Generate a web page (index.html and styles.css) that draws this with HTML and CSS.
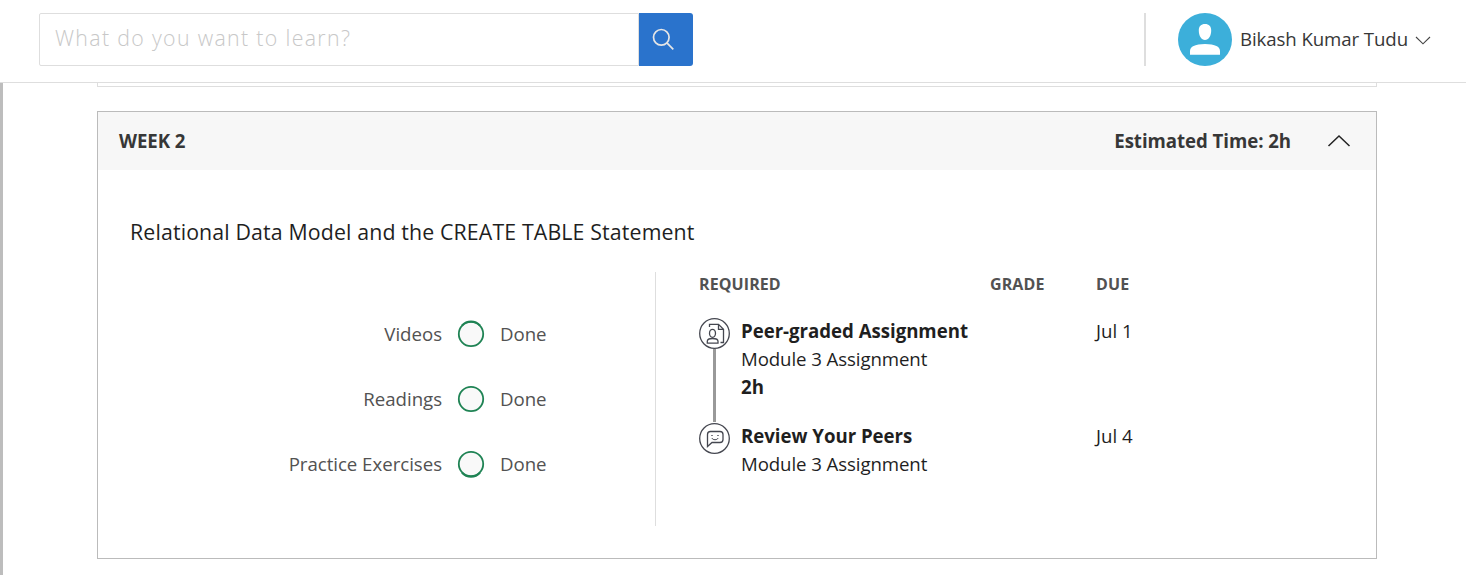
FILE: index.html
```html
<!DOCTYPE html>
<html lang="en">
<head>
<meta charset="utf-8">
<title>Course Home</title>
<link rel="stylesheet" href="styles.css">
</head>
<body>
<header class="topbar">
  <form class="search">
    <input class="search-input" type="text" placeholder="What do you want to learn?">
    <button class="search-button" type="button" aria-label="Search">
      <svg width="24" height="24" viewBox="0 0 24 24" fill="none" stroke="#e6e6e6" stroke-width="1.7"><circle cx="9.300" cy="9.300" r="7.800"/><path d="M14.900 14.900L21.300 21.300"/></svg>
    </button>
  </form>
  <div class="account">
    <svg class="avatar" width="54" height="53" viewBox="0 0 54 53"><ellipse cx="27" cy="26.5" rx="27" ry="26.5" fill="#3cafda"/><path fill="#fff" d="M27 11c4 0 6.200 2.200 6.200 6.500C33.200 23 30.500 27 27 27s-6.200-4-6.200-9.500C20.800 13.200 23 11 27 11zM12 41.700v-3.500c0-2 .8-4 3-5C18.500 31.700 22 31 27 31s8.500.7 12 2.200c2.200 1 3 3 3 5v3.500z"/></svg>
    <span class="user">Bikash Kumar Tudu</span>
    <svg class="caret" width="16" height="9" viewBox="0 0 16 9" fill="none" stroke="#444" stroke-width="1.100"><path d="M1 1l7 6.800L15 1"/></svg>
  </div>
</header>
<main class="page">
  <div class="previous-card"></div>
  <section class="week">
    <div class="week-header">
      <span>WEEK 2</span>
      <span class="estimate">Estimated Time: 2h</span>
      <svg width="24" height="14" viewBox="0 0 24 14" fill="none" stroke="#222" stroke-width="1.500"><path d="M1.500 12L12 2l10.500 10"/></svg>
    </div>
    <div class="week-body">
      <h2 class="title">Relational Data Model and the CREATE TABLE Statement</h2>
      <div class="columns">
        <div class="progress">
          <span class="kind">Videos</span><svg width="28" height="28" viewBox="0 0 28 28"><circle cx="14" cy="14" r="12.200" fill="#f9f9f9" stroke="#1f8354" stroke-width="1.800"/><path d="M5 5.500a12.300 12.300 0 0 1 18 0" fill="none" stroke="#1f8354" stroke-width="2"/></svg><span>Done</span>
          <span class="kind">Readings</span><svg width="28" height="28" viewBox="0 0 28 28"><circle cx="14" cy="14" r="12.200" fill="#f9f9f9" stroke="#1f8354" stroke-width="1.800"/></svg><span>Done</span>
          <span class="kind">Practice Exercises</span><svg width="28" height="28" viewBox="0 0 28 28"><circle cx="14" cy="14" r="12.200" fill="#f9f9f9" stroke="#1f8354" stroke-width="1.800"/><path d="M5 22.800a12.300 12.300 0 0 0 18 0" fill="none" stroke="#1f8354" stroke-width="2"/></svg><span>Done</span>
        </div>
        <div class="required">
          <div class="row row-head"><span class="span-two">REQUIRED</span><span>GRADE</span><span>DUE</span></div>
          <div class="row">
            <div class="track">
              <svg width="31" height="31" viewBox="0 0 31 31" fill="none" stroke="#454750" stroke-width="1.300"><circle cx="15.500" cy="15.500" r="14.800"/><path d="M10.500 9V6.300H19.500l5 5V24.500H21.500M19.500 6.300v5h5"/><ellipse cx="13.500" cy="15.300" rx="3" ry="4"/><path d="M8.300 25.200v-2c0-2 1.700-2.700 5.200-2.700s5.500.7 5.500 2.700v2z"/></svg>
              <div class="track-line"></div>
            </div>
            <div class="task"><b>Peer-graded Assignment</b><span>Module 3 Assignment</span><b>2h</b></div>
            <span></span>
            <span class="due">Jul 1</span>
          </div>
          <div class="row">
            <div class="track">
              <svg width="31" height="31" viewBox="0 0 31 31" fill="none" stroke="#454750" stroke-width="1.300"><circle cx="15.500" cy="15.500" r="14.800"/><path d="M8.500 23.500V11.500c0-2 1-3 3-3h9.500c2 0 3 1 3 3V16.500c0 2-1 3-3 3H13z"/><path d="M12.300 12.500h1.400M18.300 12.500h1.400M12.800 15c.8 1.300 1.800 1.700 3.200 1.700s2.400-.4 3.200-1.700" stroke-width="1"/></svg>
            </div>
            <div class="task"><b>Review Your Peers</b><span>Module 3 Assignment</span></div>
            <span></span>
            <span class="due">Jul 4</span>
          </div>
        </div>
      </div>
    </div>
  </section>
</main>
</body>
</html>
```

FILE: styles.css
```css
* { box-sizing: border-box; }
body {
  margin: 0;
  height: 575px;
  overflow: hidden;
  background: #fff;
  color: #1f1f1f;
  font-family: "Open Sans", sans-serif;
  font-size: 18.667px;
  line-height: 28px;
}
svg { display: block; flex: none; }
.topbar {
  height: 83px;
  padding: 13px 35px 0 39px;
  border-bottom: 1px solid #dedede;
  display: flex;
  justify-content: space-between;
}
.search { display: flex; width: 654px; height: 53px; }
.search-input {
  width: 600px;
  height: 53px;
  border: 1px solid #dedede;
  border-radius: 2px 0 0 2px;
  padding: 0 15px 5px;
  font-family: "Open Sans", sans-serif;
  font-size: 21.333px;
  font-weight: 300;
  letter-spacing: 1.33px;
}
.search-input::placeholder { color: #c8c8c8; }
.search-button {
  width: 54px;
  height: 53px;
  border: 0;
  border-radius: 0 3px 3px 0;
  padding: 0 0 0 13px;
  background: #2a73cc;
}
.account {
  height: 53px;
  border-left: 2px solid #dedede;
  padding-left: 32px;
  display: flex;
  align-items: center;
  color: #373737;
}
.user { margin: -2px 0 0 8px; letter-spacing: -0.1px; }
.caret { margin: 2px 0 0 7px; }
.page {
  height: 492px;
  border-left: 3px solid #bdbdbd;
  padding: 0 89px 0 94px;
}
.previous-card {
  height: 4px;
  border: 1px solid #dedede;
  border-top: 0;
  margin-bottom: 24px;
}
.week { height: 448px; border: 1px solid #bbb; }
.week-header {
  height: 58px;
  background: #f7f7f7;
  padding: 0 25px 0 21px;
  display: flex;
  align-items: center;
  gap: 36px;
  color: #373737;
  font-weight: 700;
  letter-spacing: -0.06px;
}
.estimate { margin-left: auto; }
.week-body { padding: 48px 32px 0; }
.title {
  margin: 0;
  font-size: 21.333px;
  line-height: 28px;
  font-weight: 400;
  letter-spacing: 0.13px;
}
.columns { display: flex; margin-top: 26px; height: 254px; }
.progress {
  width: 526px;
  border-right: 1px solid #dedede;
  padding-top: 29px;
  display: grid;
  grid-template-columns: 312px 28px 1fr;
  grid-template-rows: repeat(3, 65px);
  column-gap: 15px;
  align-items: center;
  color: #525252;
  letter-spacing: -0.03px;
}
.kind { text-align: right; }
.required { margin-left: 43px; }
.row { display: grid; grid-template-columns: 42px 249px 106px 80px; height: 105px; }
.row-head {
  height: 45px;
  font-size: 16px;
  line-height: 24px;
  font-weight: 700;
  letter-spacing: 0.1px;
  color: #525252;
}
.span-two { grid-column: span 2; }
.track { padding-top: 1px; display: flex; flex-direction: column; }
.track-line { width: 3px; flex: 1; margin-left: 14px; background: #999; }
.task { display: flex; flex-direction: column; }
.task b { letter-spacing: -0.03px; }
.task span { letter-spacing: -0.1px; }
```
